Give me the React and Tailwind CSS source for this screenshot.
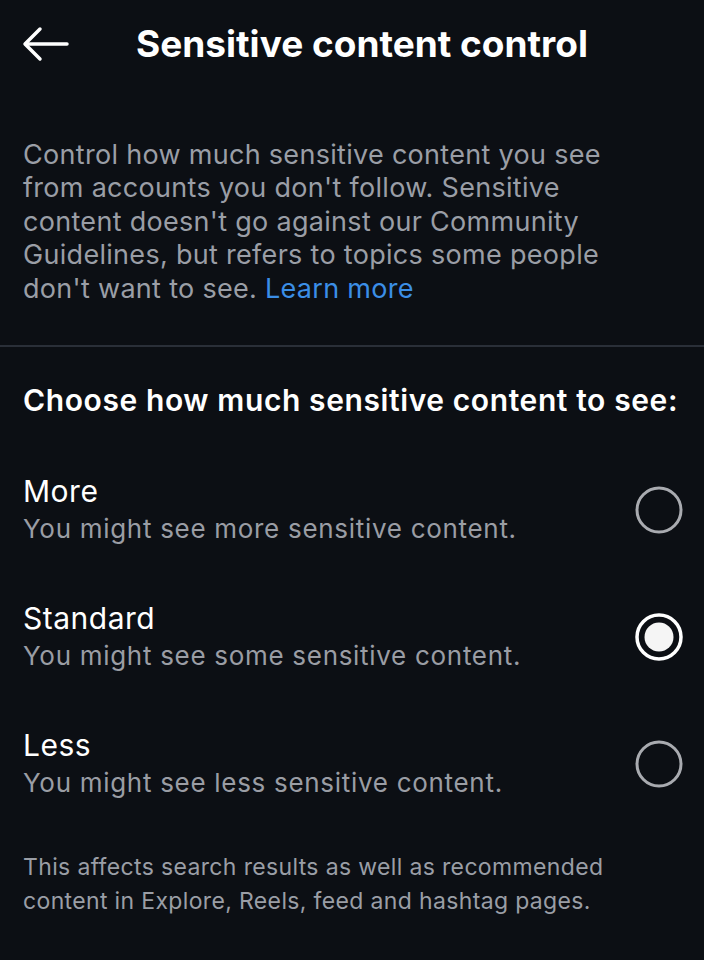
import React from "react";

function Radio({ checked }) {
  if (checked) {
    return (
      <svg width="52" height="52" viewBox="0 0 52 52" className="shrink-0">
        <circle cx="26" cy="26" r="22" fill="none" stroke="#ffffff" strokeWidth="3.5" />
        <circle cx="26" cy="26" r="14.5" fill="#f5f5f5" />
      </svg>
    );
  }
  return (
    <svg width="52" height="52" viewBox="0 0 52 52" className="shrink-0">
      <circle cx="26" cy="26" r="22" fill="none" stroke="#a9abb0" strokeWidth="3" />
    </svg>
  );
}

function Option({ title, sub, checked }) {
  return (
    <div className="flex items-center justify-between pl-[23px] pr-[19px]">
      <div className="flex flex-col">
        <div className="text-[30px] leading-[38px] tracking-[0.5px] text-white">{title}</div>
        <div className="text-[26px] leading-[38px] tracking-[0.7px] text-[#9a9da4]">{sub}</div>
      </div>
      <Radio checked={checked} />
    </div>
  );
}

export default function App() {
  return (
    <div className="w-[704px] h-[960px] bg-[#0c0f14] overflow-hidden" style={{ fontFamily: "Inter, 'Noto Sans', sans-serif" }}>
      <div className="flex items-center h-[88px] pl-[22px]">
        <svg width="48" height="36" viewBox="0 0 48 36" fill="none" stroke="#ffffff" strokeWidth="3.5" strokeLinecap="round" strokeLinejoin="round">
          <path d="M45 18H4" />
          <path d="M18 3L3 18L18 33" />
        </svg>
        <div className="ml-[66px] text-[37px] font-bold text-white">Sensitive content control</div>
      </div>
      <div className="pt-[50px] px-[23px] text-[27px] leading-[33.4px] tracking-[0.3px] text-[#9a9ea6]">
        Control how much sensitive content you see<br />
        from accounts you don't follow. Sensitive<br />
        content doesn't go against our Community<br />
        Guidelines, but refers to topics some people<br />
        don't want to see. <span className="text-[#3b8ee6]">Learn more</span>
      </div>
      <div className="mt-[40px] h-[2px] bg-[#2a2f38]" />
      <div className="mt-[33px] px-[23px] text-[30px] font-semibold tracking-[0.6px] text-white leading-[40px] whitespace-nowrap">
        Choose how much sensitive content to see:
      </div>
      <div className="mt-[52px] flex flex-col gap-[51px]">
        <Option title="More" sub="You might see more sensitive content." />
        <Option title="Standard" sub="You might see some sensitive content." checked />
        <Option title="Less" sub="You might see less sensitive content." />
      </div>
      <div className="mt-[48px] px-[23px] text-[23px] leading-[34px] tracking-[0.35px] text-[#9a9ea6]">
        This affects search results as well as recommended<br />
        content in Explore, Reels, feed and hashtag pages.
      </div>
    </div>
  );
}
